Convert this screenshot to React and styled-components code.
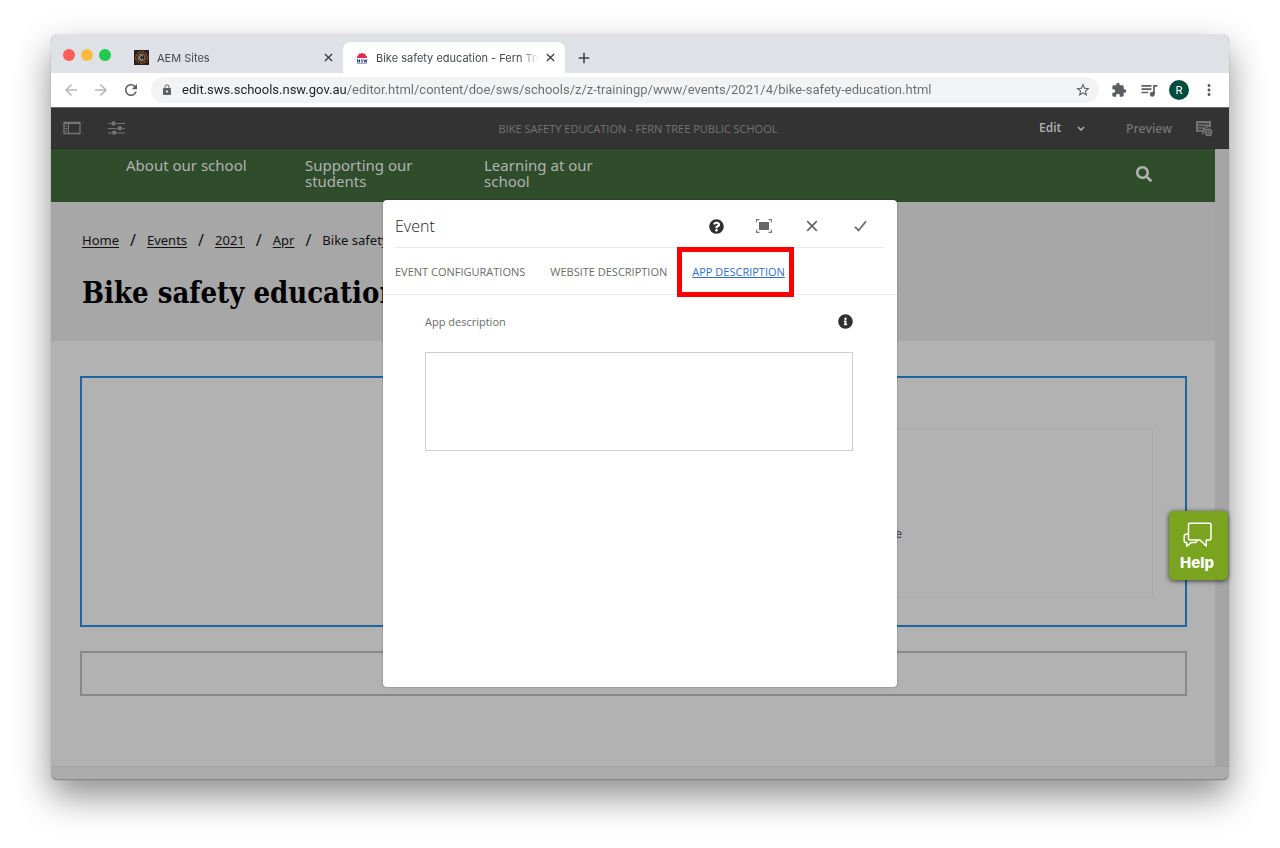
import React from "react";
import styled, { createGlobalStyle } from "styled-components";
import {
  MdArrowBack,
  MdArrowForward,
  MdRefresh,
  MdLock,
  MdStarBorder,
  MdExtension,
  MdQueueMusic,
  MdMoreVert,
  MdAdd,
} from "react-icons/md";
import { FaSearch, FaQuestionCircle, FaInfoCircle } from "react-icons/fa";

const crumbs = ["Home", "Events", "2021", "Apr"];
const navItems = [
  "About our school",
  "Supporting our students",
  "Learning at our school",
];
const dialogTabs = [
  "EVENT CONFIGURATIONS",
  "WEBSITE DESCRIPTION",
  "APP DESCRIPTION",
];

const AemFavicon = () => (
  <svg width="15" height="15" viewBox="0 0 15 15" fill="none">
    <rect width="15" height="15" fill="#2b211c" />
    <circle cx="7.5" cy="7.5" r="5.8" stroke="#b8682c" strokeDasharray="3 .8" />
    <circle cx="7.5" cy="7.5" r="3.6" stroke="#9a8474" />
    <path d="M9 6.2a2 2 0 1 0 0 2.6" stroke="#c9b9a8" />
  </svg>
);

const NswFavicon = () => (
  <svg width="12" height="12" viewBox="0 0 12 12">
    <path
      d="M1.200 6C.6 5 1.200 3.600 2.300 3.400 2.300 1.800 3.800 1.200 4.600 1.700 5.200.6 6.800.6 7.400 1.700 8.400 1.200 9.700 1.900 9.700 3.400c1.200.3 1.700 1.600 1.100 2.600z"
      fill="#e5294d"
    />
    <path
      d="M1.500 10.500V7.400l2 3V7.400M6.800 7.800c-1.800-.5-2.200 1-.9 1.200 1.500.4.900 1.700-.9 1.200M7.900 7.400l.7 3 .8-2.600.8 2.600.7-3"
      stroke="#2f4788"
      strokeWidth="1"
      fill="none"
    />
    <path d="M1 11.500h10" stroke="#8592bd" strokeWidth=".8" />
  </svg>
);

const PanelIcon = () => (
  <svg width="18" height="14" viewBox="0 0 18 14" fill="none">
    <path d="M1 1.500h16v11H1z" stroke="#747474" strokeWidth="1.300" />
    <path d="M1 2h16" stroke="#747474" strokeWidth="2" />
    <path d="M5.500 2v10" stroke="#747474" />
    <path d="M2 5h2.500M2 7.500h2.500M2 10h2.500" stroke="#747474" strokeWidth="1.200" />
  </svg>
);

const SlidersIcon = () => (
  <svg width="18" height="14" viewBox="0 0 18 14" fill="none">
    <path
      d="M0 2.500h2M9 2.500h8M0 7.500h8M15 7.500h2M0 12h3M10 12h7"
      stroke="#747474"
    />
    <path d="M2 2.500h7M8 7.500h7M3 12h7" stroke="#747474" strokeWidth=".7" />
    <circle cx="5.500" cy="2.500" r="2.200" fill="#747474" />
    <circle cx="11.800" cy="7.300" r="2.200" fill="#747474" />
    <circle cx="6.300" cy="11.600" r="2.200" fill="#747474" />
  </svg>
);

const AnnotateIcon = () => (
  <svg width="18" height="17" viewBox="0 0 18 17">
    <path
      fillRule="evenodd"
      d="M1 1h15v6.600a4.600 4.600 0 0 0-6.600 4.100L7.200 15.500V11.700H1zM3 3.200v1.300h11V3.200zM3 6v1.300h8V6zM3 8.700V10h5V8.700z"
      fill="#747474"
    />
    <circle cx="13.500" cy="12.300" r="3" stroke="#747474" strokeWidth="1.800" fill="none" />
    <path d="M13.500 10.800v3M12 12.300h3" stroke="#747474" strokeWidth="1.200" />
  </svg>
);

const FullscreenIcon = () => (
  <svg width="16" height="14" viewBox="0 0 16 14" fill="none">
    <rect x="3" y="3" width="10" height="8" fill="#666" />
    <path
      d="M.6 3.500V.6H3.500M12.500.6h2.900v2.900M15.400 10.500v2.900h-2.900M3.500 13.400H.6v-2.900"
      stroke="#777"
      strokeWidth="1.100"
    />
  </svg>
);

const CrossIcon = ({ size = 12, color = "#6b6b6b" }) => (
  <svg width={size} height={size} viewBox="0 0 12 12" fill="none">
    <path d="M1.200 1.200l9.600 9.600M10.800 1.200L1.200 10.800" stroke={color} strokeWidth="1.800" />
  </svg>
);

const CheckIcon = () => (
  <svg width="13" height="12" viewBox="0 0 13 12" fill="none">
    <path d="M1 6.800l3.600 3.700L12 1.200" stroke="#6b6b6b" strokeWidth="1.800" />
  </svg>
);

const ChatIcon = () => (
  <svg width="29" height="26" viewBox="0 0 29 26" fill="none" stroke="#fff" strokeWidth="1.500" strokeLinejoin="round">
    <path d="M7 1.200h19.500a1.500 1.500 0 0 1 1.500 1.500V16.500a1.500 1.500 0 0 1-1.500 1.500H23.200v6L17 18H7a1.500 1.500 0 0 1-1.500-1.500V2.700A1.500 1.500 0 0 1 7 1.200z" />
    <path d="M5.500 12.300H3a1.800 1.800 0 0 0-1.800 1.800v4.700A1.800 1.800 0 0 0 3 20.600h.8v3.700l4.400-3.700h4.600l1.700-2.600" />
  </svg>
);

const App = () => (
  <>
    <GlobalStyle />
    <Desktop>
      <Browser>
        <TabStrip>
          <Lights>
            <Light color="#fd5f57" />
            <Light color="#febc3f" />
            <Light color="#1fca4c" />
          </Lights>
          <BrowserTab>
            <AemFavicon />
            <TabTitle>AEM Sites</TabTitle>
            <CloseTab $size={14} aria-label="Close AEM Sites">
              <CrossIcon size={9} color="#3c4043" />
            </CloseTab>
          </BrowserTab>
          <BrowserTab $active>
            <NswFavicon />
            <TabTitle>Bike safety education - Fern Tree Public School</TabTitle>
            <CloseTab $size={14} aria-label="Close Bike safety education">
              <CrossIcon size={9} color="#3c4043" />
            </CloseTab>
          </BrowserTab>
          <NewTab $size={20} aria-label="New tab">
            <MdAdd size={18} />
          </NewTab>
        </TabStrip>

        <Toolbar>
          <IconButton $size={20} $muted aria-label="Back">
            <MdArrowBack size={18} />
          </IconButton>
          <IconButton $size={20} $muted aria-label="Forward">
            <MdArrowForward size={18} />
          </IconButton>
          <IconButton $size={20} aria-label="Reload">
            <MdRefresh size={18} />
          </IconButton>
          <AddressBar>
            <MdLock size={12} />
            <AddressInput
              aria-label="Address"
              readOnly
              value="edit.sws.schools.nsw.gov.au/editor.html/content/doe/sws/schools/z/z-trainingp/www/events/2021/4/bike-safety-education.html"
            />
            <IconButton $size={20} aria-label="Bookmark this page">
              <MdStarBorder size={16} />
            </IconButton>
          </AddressBar>
          <IconButton $size={20} aria-label="Extensions">
            <MdExtension size={16} />
          </IconButton>
          <IconButton $size={20} aria-label="Media">
            <MdQueueMusic size={20} />
          </IconButton>
          <Avatar aria-label="Profile">R</Avatar>
          <IconButton $size={20} aria-label="Menu">
            <MdMoreVert size={18} />
          </IconButton>
        </Toolbar>

        <EditorBar>
          <EditorGroup>
            <IconButton $size={18} aria-label="Toggle side panel">
              <PanelIcon />
            </IconButton>
            <IconButton $size={18} aria-label="Page information">
              <SlidersIcon />
            </IconButton>
          </EditorGroup>
          <EditorTitle>BIKE SAFETY EDUCATION - FERN TREE PUBLIC SCHOOL</EditorTitle>
          <EditorActions>
            <ModeBox>
              <ModeSelect aria-label="Mode" defaultValue="Edit">
                <option>Edit</option>
              </ModeSelect>
              <ModeChevron width="8" height="6" viewBox="0 0 8 6">
                <path d="M1 1l3 3 3-3" stroke="#b0b0b0" strokeWidth="1.500" fill="none" />
              </ModeChevron>
            </ModeBox>
            <PreviewButton>Preview</PreviewButton>
            <IconButton $size={18} aria-label="Annotate">
              <AnnotateIcon />
            </IconButton>
          </EditorActions>
        </EditorBar>

        <Viewport>
          <Site>
            <SiteNav>
              <NavLinks>
                {navItems.map(item => (
                  <NavLink href="#" key={item}>
                    {item}
                  </NavLink>
                ))}
              </NavLinks>
              <SearchButton $size={20} aria-label="Search">
                <FaSearch size={16} />
              </SearchButton>
            </SiteNav>
            <Banner>
              <Breadcrumbs>
                {crumbs.map(crumb => (
                  <React.Fragment key={crumb}>
                    <Crumb href="#">{crumb}</Crumb>
                    <Slash>/</Slash>
                  </React.Fragment>
                ))}
                <span>Bike safety education</span>
              </Breadcrumbs>
              <PageTitle>Bike safety education</PageTitle>
            </Banner>
            <Content>
              <SelectedComponent>
                <Placeholder>e</Placeholder>
              </SelectedComponent>
              <DropZone />
            </Content>
          </Site>
          <ScrollTrack />
        </Viewport>
        <BottomBar />

        <HelpButton>
          <ChatIcon />
          Help
        </HelpButton>

        <Dialog role="dialog" aria-label="Event">
          <DialogHeader>
            <DialogTitle>Event</DialogTitle>
            <DialogButton aria-label="Help">
              <FaQuestionCircle size={15} color="#303030" />
            </DialogButton>
            <DialogButton aria-label="Toggle fullscreen">
              <FullscreenIcon />
            </DialogButton>
            <DialogButton aria-label="Cancel">
              <CrossIcon />
            </DialogButton>
            <DialogButton aria-label="Done">
              <CheckIcon />
            </DialogButton>
          </DialogHeader>
          <DialogTabs>
            {dialogTabs.map(tab => (
              <DialogTab
                href="#"
                key={tab}
                $active={tab === "APP DESCRIPTION"}
              >
                {tab}
              </DialogTab>
            ))}
          </DialogTabs>
          <DialogBody>
            <FieldHead>
              <label htmlFor="app-description">App description</label>
              <FaInfoCircle size={15} color="#303030" />
            </FieldHead>
            <TextBox id="app-description" />
          </DialogBody>
        </Dialog>
      </Browser>
    </Desktop>
  </>
);

const GlobalStyle = createGlobalStyle`
  * {
    box-sizing: border-box;
  }

  body {
    margin: 0;
    background: #fff;
    font-family: "Open Sans", "Noto Sans", sans-serif;
  }

  button {
    padding: 0;
    border: none;
    background: none;
    font-family: inherit;
  }
`;

const Desktop = styled.div`
  padding: 35px 51px 68px;
  overflow: hidden;
`;

const Browser = styled.div`
  position: relative;
  border-radius: 6px;
  background: #b2b2b2;
  box-shadow: 0 0 1px rgba(0, 0, 0, 0.5), 0 16px 36px rgba(0, 0, 0, 0.45);
`;

const IconButton = styled.button`
  flex: none;
  display: flex;
  align-items: center;
  justify-content: center;
  width: ${props => props.$size}px;
  height: ${props => props.$size}px;
  color: ${props => (props.$muted ? "#b4b6b9" : "#5a5d61")};
`;

const TabStrip = styled.div`
  display: flex;
  align-items: flex-end;
  height: 38px;
  background: #dee1e6;
  border-radius: 6px 6px 0 0;
`;

const Lights = styled.div`
  display: flex;
  gap: 6px;
  width: 70px;
  padding: 0 0 12px 12px;
`;

const Light = styled.span`
  width: 12px;
  height: 12px;
  border-radius: 50%;
  background: ${props => props.color};
`;

const BrowserTab = styled.div`
  display: flex;
  align-items: center;
  gap: 8px;
  width: 222px;
  height: 31px;
  padding: 0 8px 0 13px;
  color: #45494d;
  border-radius: 8px 8px 0 0;
  background: ${props => (props.$active ? "#fff" : "none")};
`;

const TabTitle = styled.span`
  flex: 1;
  overflow: hidden;
  white-space: nowrap;
  font: 11px/16px Inter, sans-serif;
  mask-image: linear-gradient(to right, #000 calc(100% - 20px), transparent);
`;

const CloseTab = styled(IconButton)`
  margin-left: -4px;
`;

const NewTab = styled(IconButton)`
  margin: 0 0 5px 9px;
  color: #3c4043;
`;

const Toolbar = styled.div`
  display: flex;
  align-items: center;
  gap: 10px;
  height: 34px;
  padding: 0 10px;
  background: #fff;
`;

const AddressBar = styled.div`
  flex: 1;
  display: flex;
  align-items: center;
  gap: 9px;
  height: 26px;
  padding: 0 6px 0 10px;
  color: #5f6368;
  border-radius: 13px;
  background: #f1f3f4;
`;

/* host is darker than the rest of the url */
const AddressInput = styled.input`
  flex: 1;
  min-width: 0;
  padding: 0;
  border: none;
  outline: none;
  font: 13px/20px Roboto, sans-serif;
  color: #5f6368;
  background: linear-gradient(to right, #202124 165px, #6a6d71 165px);
  background-clip: text;
  -webkit-text-fill-color: transparent;
`;

const Avatar = styled.button`
  width: 20px;
  height: 20px;
  border-radius: 50%;
  background: #004d40;
  color: #fff;
  && {
    font: 11px/20px Inter, sans-serif;
  }
`;

const EditorBar = styled.div`
  display: grid;
  grid-template-columns: 1fr auto 1fr;
  align-items: center;
  height: 42px;
  padding: 0 16px 0 12px;
  background: #333;
  border-top: 1px solid #6e6e6e;
  border-bottom: 1px solid #2b2b2b;
`;

const EditorGroup = styled.div`
  display: flex;
  gap: 27px;
`;

const EditorTitle = styled.span`
  font-size: 11px;
  color: #747474;
`;

const EditorActions = styled.div`
  display: flex;
  align-items: center;
  justify-content: flex-end;
  gap: 23px;
`;

const ModeBox = styled.div`
  position: relative;
  display: flex;
  width: 64px;
`;

const ModeSelect = styled.select`
  width: 100%;
  padding: 0;
  border: none;
  appearance: none;
  background: none;
  font: 600 12px/18px "Open Sans", sans-serif;
  color: #b0b0b0;
`;

const ModeChevron = styled.svg`
  position: absolute;
  top: 7px;
  right: 18px;
  pointer-events: none;
`;

const PreviewButton = styled.button`
  font-size: 12px;
  font-weight: 600;
  color: #747474;
`;

const Viewport = styled.div`
  display: flex;
`;

const Site = styled.div`
  flex: 1;
`;

const ScrollTrack = styled.div`
  width: 14px;
  background: #a5a5a5;
`;

const SiteNav = styled.nav`
  display: flex;
  justify-content: space-between;
  height: 53px;
  padding: 8px 61px 0 75px;
  background: #2f4d2b;
`;

const NavLinks = styled.div`
  display: flex;
  gap: 48px;
`;

const NavLink = styled.a`
  width: 131px;
  font-family: "Noto Sans", sans-serif;
  font-size: 15px;
  line-height: 16px;
  text-decoration: none;
  color: #b2b2b2;
`;

const SearchButton = styled(IconButton)`
  margin-top: 7px;
  color: #b2b2b2;
`;

const Banner = styled.header`
  height: 139px;
  padding: 27px 31px 0;
  background: #a7a7a7;
`;

const Breadcrumbs = styled.div`
  display: flex;
  align-items: center;
  gap: 11px;
  height: 22px;
  font-family: "Noto Sans", sans-serif;
  font-size: 13px;
  color: #111;
`;

const Crumb = styled.a`
  color: inherit;
  text-underline-offset: 2px;
`;

const Slash = styled.span`
  font-size: 16px;
`;

const PageTitle = styled.h1`
  margin: 24px 0 0;
  font: bold 29px/36px "DejaVu Serif Condensed", "DejaVu Serif", serif;
  color: #000;
`;

const Content = styled.main`
  display: flex;
  flex-direction: column;
  gap: 24px;
  padding: 35px 28px 70px 29px;
`;

const SelectedComponent = styled.section`
  display: flex;
  justify-content: flex-end;
  padding: 50px 32px 27px;
  border: 2px solid #1f64a3;
`;

const Placeholder = styled.div`
  display: flex;
  align-items: center;
  justify-content: center;
  width: 49%;
  height: 170px;
  padding-top: 40px;
  border: 1px solid #aaa;
  font-size: 13px;
  font-weight: 600;
  color: #555;
`;

const DropZone = styled.div`
  height: 45px;
  border: 2px solid #888;
`;

const BottomBar = styled.div`
  height: 14px;
  background: #acacac;
  border-top: 1px solid #a2a2a2;
  border-bottom: 1px solid #8c8c8c;
  border-radius: 0 0 6px 6px;
`;

const HelpButton = styled.button`
  position: absolute;
  top: 476px;
  right: 1px;
  display: flex;
  flex-direction: column;
  align-items: center;
  gap: 5px;
  width: 59px;
  height: 69px;
  padding: 11px 3px 0 0;
  border-radius: 5px;
  background: #7aa320;
  color: #fff;
  box-shadow: 0 1px 5px rgba(0, 0, 0, 0.7);
  && {
    font: 800 15px/20px Inter, sans-serif;
  }
`;

const Dialog = styled.div`
  position: absolute;
  top: 165px;
  left: 50%;
  width: 514px;
  margin-left: -257px;
  border-radius: 4px;
  background: #fff;
  box-shadow: 0 0 2px rgba(0, 0, 0, 0.4);
`;

const DialogHeader = styled.div`
  display: flex;
  align-items: center;
  height: 48px;
  margin: 0 13px 0 12px;
  padding-top: 5px;
  border-bottom: 1px solid #eaeaea;
`;

const DialogTitle = styled.h2`
  flex: 1;
  margin: 0;
  font-size: 16px;
  font-weight: 300;
  color: #222;
`;

const DialogButton = styled.button`
  display: flex;
  align-items: center;
  justify-content: center;
  width: 48px;
  height: 32px;
`;

const DialogTabs = styled.div`
  display: flex;
  align-items: center;
  gap: 25px;
  height: 47px;
  padding: 2px 12px 0;
  border-bottom: 1px solid #eaeaea;
`;

const DialogTab = styled.a`
  position: relative;
  font-size: 11px;
  line-height: 16px;
  text-decoration: none;
  color: #6b6b6b;

  ${props =>
    props.$active &&
    `
    color: #326ec8;
    text-decoration: underline;

    &::after {
      content: "";
      position: absolute;
      inset: -17px -9px -17px -15px;
      border: 5px solid #fe0000;
    }
  `}
`;

const DialogBody = styled.div`
  min-height: 392px;
  padding: 17px 44px 0 42px;
`;

const FieldHead = styled.div`
  display: flex;
  align-items: center;
  justify-content: space-between;
  height: 18px;
  margin-bottom: 22px;
  font-size: 11px;
  color: #6b6b6b;
`;

const TextBox = styled.textarea`
  display: block;
  width: 100%;
  height: 99px;
  border: 1px solid #ccc;
  resize: none;
  background: #fff;
`;

export default App;
